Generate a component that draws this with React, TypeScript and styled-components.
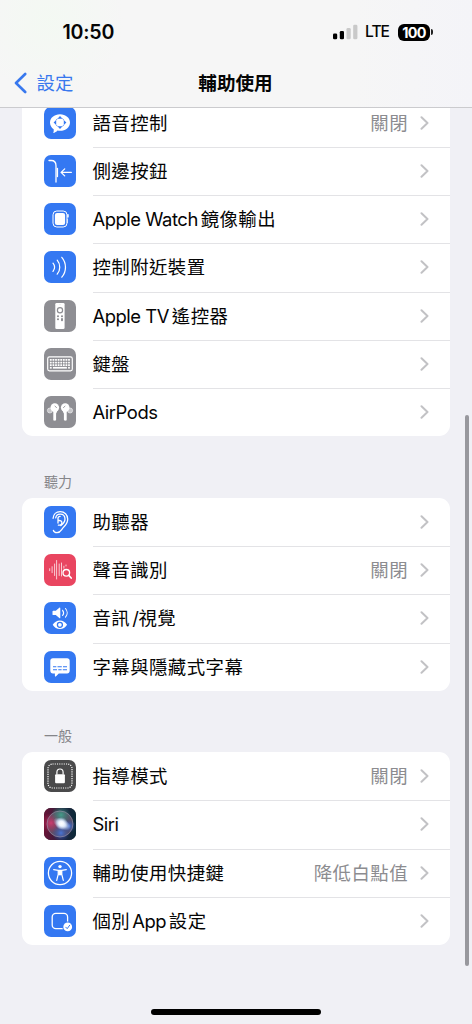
import React from "react";
import styled, { createGlobalStyle } from "styled-components";

const Global = createGlobalStyle`
  * { box-sizing: border-box; }
  body { margin: 0; background: #f0f0f6; }
`;

const cjk = `Inter, "Noto Sans CJK TC", sans-serif`;

const Screen = styled.div`
  position: relative;
  display: flex;
  flex-direction: column;
  width: 472px;
  height: 1024px;
  overflow: hidden;
  background: #f0f0f5;
  color: #050505;
  font-family: ${cjk};
  font-size: 18.4px;
  line-height: 24px;
`;

const Header = styled.header`
  flex: none;
  height: 108px;
  border-bottom: 1px solid #cbcbce;
  background:
    radial-gradient(circle at 50px 22px, rgba(242, 250, 241, 0.7), transparent 75px),
    linear-gradient(90deg, #f6f6f6, #f6f6f6 75%, #f4f4f8);
`;

const StatusBar = styled.div`
  display: flex;
  align-items: center;
  justify-content: space-between;
  height: 59px;
  padding: 5px 39px 0 62.5px;
`;

const Time = styled.span`
  font-size: 19.6px;
  font-weight: 600;
  letter-spacing: -0.2px;
`;

const StatusIcons = styled.div`
  display: flex;
  align-items: center;
`;

const Network = styled.span`
  margin: 0 9px 0 7.5px;
  font-size: 15.6px;
  font-weight: 500;
  letter-spacing: -1px;
`;

const Battery = styled.div`
  display: flex;
  align-items: center;
  justify-content: center;
  width: 32px;
  height: 17px;
  padding: 1px 0 0 0;
  border-radius: 6px;
  background: #000;
  color: #fff;
  font-size: 14.4px;
  font-weight: 700;
  letter-spacing: -0.7px;
`;

const BatteryTip = styled.i`
  width: 2px;
  height: 6px;
  margin-left: 1px;
  border-radius: 0 2px 2px 0;
  background: #222;
`;

const NavBar = styled.nav`
  display: grid;
  grid-template-columns: 1fr auto 1fr;
  align-items: center;
  height: 48px;
  padding: 0 15px 0 14px;
`;

const Back = styled.a`
  display: flex;
  align-items: center;
  gap: 9.5px;
  color: #3878ee;
`;

const Title = styled.h1`
  margin: 0;
  font-size: 18.6px;
  font-weight: 700;
  line-height: 24px;
`;

const Content = styled.main`
  flex: 1;
  min-height: 0;
  overflow: hidden;
  padding: 0 22px;
`;

const Group = styled.section<{ $clipped?: boolean }>`
  margin-top: ${(p) => (p.$clipped ? "-9.6px" : "0")};
  border-radius: 11px;
  background: #fff;
  overflow: hidden;
`;

const GroupTitle = styled.h2`
  display: flex;
  align-items: flex-end;
  height: 61.2px;
  margin: 0;
  padding: 0 22px 7px;
  color: #858589;
  font-size: 14px;
  font-weight: 400;
  line-height: 18px;
`;

const Row = styled.div`
  display: flex;
  align-items: center;
  height: 48.3px;
  padding-left: 22px;
`;

const RowBody = styled.div<{ $last: boolean }>`
  display: flex;
  flex: 1;
  align-items: center;
  align-self: flex-start;
  height: calc(100% + 1px);
  margin-left: 16.5px;
  padding-right: 21.5px;
  border-bottom: 1px solid ${(p) => (p.$last ? "transparent" : "#e3e3e6")};
`;

const Label = styled.span`
  flex: 1;
  letter-spacing: 0.45px;
  white-space: pre;
`;

const Latin = styled.span<{ $before?: boolean; $after?: boolean }>`
  margin-left: ${(p) => (p.$before ? "2px" : "0")};
  margin-right: ${(p) => (p.$after ? "2.8px" : "0")};
  letter-spacing: -0.45px;
`;

const Value = styled.span`
  margin-right: 11.5px;
  color: #8c8c90;
  letter-spacing: 0.45px;
`;

const Tile = styled.svg`
  flex: none;
  width: 32px;
  height: 32px;
  border-radius: 7px;
`;

const ScrollThumb = styled.div`
  position: absolute;
  top: 415px;
  right: 3px;
  width: 4px;
  height: 551px;
  border-radius: 2px;
  background: #98989d;
`;

const HomeIndicator = styled.div`
  position: absolute;
  bottom: 9px;
  left: 151px;
  width: 170px;
  height: 6px;
  border-radius: 3px;
  background: #000;
`;

const BLUE = "#3478f2";
const GRAY = "#8e8e93";

const keys: [number, number][] = [];
for (let r = 0; r < 3; r++) for (let c = 0; c < 8; c++) keys.push([5.9 + c * 2.6, 11.1 + r * 2.6]);

const icons: Record<string, [string, React.ReactNode]> = {
  voice: [BLUE, <>
    <path d="M16 7.2c5.7 0 10 3.600 10 8.300s-4.300 8.300-10 8.300c-.9 0-1.700-.1-2.500-.3-1.100 1.300-2.600 2.200-4.300 2.500.5-1.100.7-2.300.5-3.700C7.300 20.600 6 18.300 6 15.500c0-4.700 4.300-8.300 10-8.300z" fill="#fff" />
    <path d="M16 9.100l2.500 2.600h-5zM16 21.900l2.500-2.600h-5zM9.600 15.500l2.600-2.500v5zM22.400 15.500l-2.600-2.500v5z" fill={BLUE} />
    <path d="M12 13.200l1.700-1.700M18.300 11.500l1.700 1.700M20 17.800l-1.700 1.700M13.700 19.500L12 17.800" fill="none" stroke={BLUE} strokeWidth=".7" />
  </>],
  side: [BLUE, <g fill="none" stroke="#fff" strokeWidth="1.300" strokeLinecap="round" strokeLinejoin="round">
    <path d="M5 5.500h2.200c2.800 0 4.800 2 4.800 5.300V27" />
    <path d="M13.400 13.500v8" strokeWidth="1.400" />
    <path d="M27.300 17.400H17.200M20.700 13.900l-3.600 3.500 3.600 3.500" />
  </g>],
  watch: [BLUE, <>
    <rect x="9" y="8" width="14" height="16" rx="3.800" fill="none" stroke="#fff" strokeWidth="1" />
    <rect x="10.900" y="9.900" width="10.200" height="12.200" rx="2.100" fill="#fff" />
    <rect x="23.200" y="11" width="1.500" height="3.600" rx=".7" fill="#fff" />
    <path d="M23.400 16v4" stroke="#fff" strokeWidth=".7" />
  </>],
  nearby: [BLUE, <g fill="none" stroke="#fff" strokeWidth="1.250" strokeLinecap="round">
    <path d="M9 12.200c1.900 2.400 1.900 5.800 0 8.200M13.200 9.200c3.400 4 3.400 10 0 14M17.800 6.300c4.900 5.700 4.900 14.200 0 19.900" />
  </g>],
  remote: [GRAY, <>
    <rect x="11.300" y="2.900" width="9.300" height="26.100" rx="1.300" fill="#fff" />
    <circle cx="16" cy="10.200" r="2.600" fill="none" stroke={GRAY} strokeWidth="1.200" />
    <g fill={GRAY}><circle cx="14" cy="16.200" r="1.050" /><circle cx="18" cy="16.200" r="1.050" /><circle cx="14" cy="19.300" r="1.050" /><rect x="17" y="18" width="2" height="3.200" rx=".9" /><circle cx="16" cy="4.500" r=".3" /></g>
  </>],
  keyboard: [GRAY, <>
    <rect x="3.700" y="8.900" width="24.600" height="14" rx="1.800" fill="none" stroke="#fff" strokeWidth="1.200" />
    <g fill="#fff">{keys.map(([x, y]) => <rect key={`${x}-${y}`} x={x} y={y} width="1.800" height="1.700" rx=".3" />)}
      <rect x="5.900" y="18.900" width="1.800" height="1.700" /><rect x="8.900" y="18.900" width="14" height="1.700" /><rect x="24.100" y="18.900" width="1.800" height="1.700" /></g>
  </>],
  airpods: [GRAY, <>
    <g fill="#c6c6c9" stroke="#ececee" strokeWidth=".7"><circle cx="5.900" cy="14.500" r="2.500" /><circle cx="26.100" cy="14.500" r="2.500" /></g>
    <g fill="#fff"><circle cx="10.800" cy="11.600" r="4.300" /><circle cx="21.200" cy="11.600" r="4.300" />
      <path d="M9.300 11h3.700v4.500c0 1-.9 1.300-.9 2.200v6.100c0 1.200-2.800 1.200-2.800 0zM22.700 11H19v4.500c0 1 .9 1.300.9 2.200v6.100c0 1.200 2.800 1.200 2.800 0z" /></g>
    <path d="M11 10.200l1.500 1.300M21 10.200l-1.500 1.300" stroke={GRAY} strokeWidth=".9" strokeLinecap="round" />
  </>],
  ear: [BLUE, <g fill="none" stroke="#fff" strokeWidth="1.300" strokeLinecap="round" strokeLinejoin="round">
    <path d="M9.100 12.300C9.300 8.300 12.300 5.600 16.200 5.600c4.300 0 7.500 3.300 7.500 7.500 0 3.300-1.500 5.700-3.700 7.700-2.800 2.500-3.200 5.900-7 5.900-1.900 0-3.300-.9-3.600-2.300" />
    <path d="M11.700 11.800c.4-2.300 2.100-3.700 4.500-3.700 3 0 4.800 2.200 4.800 5 0 2.900-1.800 4.800-4.300 6.500" />
    <path d="M14 17V12.300c0-1.200 1-1.900 2.100-1.900M14 14.600c2.400-.4 3.900.4 3.900 2.100 0 1.600-1.300 2.500-3.500 2.500" />
  </g>],
  sound: ["#e94560", <g fill="none" stroke="#fff" strokeLinecap="round">
    <path d="M5.700 14.700v2M8.100 12.700v6M10.600 10v11.500M12.600 6.500v18.500M15.200 10v11.500M17.500 9v13M19.900 12.200v2M22 11v1" strokeWidth=".85" opacity=".85" />
    <circle cx="22.300" cy="18.800" r="3.300" strokeWidth="1.350" fill="#e94560" /><path d="M24.900 21.500l2.300 2.500" strokeWidth="1.700" />
  </g>],
  av: [BLUE, <>
    <path d="M9.200 8.700h2.600l3.500-3c.5-.4 1-.2 1 .4v9.600c0 .6-.5.800-1 .4l-3.500-3H9.200c-.4 0-.7-.3-.7-.7V9.400c0-.4.3-.7.7-.7z" fill="#fff" />
    <path d="M18.600 8.300c1.200 1.500 1.200 3.700 0 5.200M21.500 6.500c2.200 2.500 2.200 6.200 0 8.700" fill="none" stroke="#fff" strokeWidth="1.100" strokeLinecap="round" />
    <path d="M8.700 22.800c1.600-2.700 4.200-4.300 7.200-4.300s5.600 1.600 7.200 4.300c-1.600 2.700-4.200 4.300-7.200 4.300s-5.600-1.600-7.200-4.300z" fill="#fff" />
    <circle cx="15.900" cy="22.800" r="2.500" fill="none" stroke={BLUE} strokeWidth="1.300" />
  </>],
  caption: [BLUE, <>
    <path d="M8.900 7.200h14.200c1.600 0 2.600 1 2.600 2.600v10c0 1.600-1 2.600-2.600 2.600h-8.300l-3 3c-.4.400-.9.200-.9-.4v-2.600h-2c-1.600 0-2.600-1-2.600-2.600v-10c0-1.600 1-2.600 2.600-2.600z" fill="#fff" />
    <path d="M9 15.700h3.300M13.500 15.700h4.300M19 15.700h4M9 18.700h4M14.300 18.700h3.300M18.800 18.700H23" stroke={BLUE} strokeWidth="1.100" />
  </>],
  guided: ["#4a4a4b", <>
    <rect x="4" y="4" width="24" height="24" rx="4.500" fill="none" stroke="#fff" strokeWidth="1.200" strokeDasharray="1.100 1.150" />
    <rect x="11.100" y="14.200" width="9.800" height="9" rx="1" fill="#fff" />
    <path d="M12.900 14.600v-2.300c0-2 1.300-3.300 3.100-3.300s3.100 1.300 3.100 3.300v2.300" fill="none" stroke="#fff" strokeWidth="1.200" />
  </>],
  siri: ["#22172a", <>
    <defs>
      <radialGradient id="core"><stop offset="0" stopColor="#fff" /><stop offset=".35" stopColor="#f2f8ff" stopOpacity=".9" /><stop offset="1" stopColor="#b9d4ff" stopOpacity="0" /></radialGradient>
      <radialGradient id="red"><stop offset="0" stopColor="#d63a70" /><stop offset="1" stopColor="#b51f50" stopOpacity="0" /></radialGradient>
      <radialGradient id="teal"><stop offset="0" stopColor="#43a08c" /><stop offset="1" stopColor="#2c7a70" stopOpacity="0" /></radialGradient>
      <radialGradient id="azure"><stop offset="0" stopColor="#4678e0" /><stop offset="1" stopColor="#28489c" stopOpacity="0" /></radialGradient>
      <linearGradient id="night"><stop offset="0" stopColor="#6a1235" /><stop offset=".6" stopColor="#1f2440" /><stop offset="1" stopColor="#0b2a38" /></linearGradient>
    </defs>
    <rect width="32" height="32" fill="url(#night)" />
    <circle cx="16" cy="16" r="13" fill="#66596f" opacity=".85" />
    <circle cx="7" cy="15" r="10" fill="url(#red)" opacity=".9" />
    <circle cx="17" cy="7" r="10" fill="url(#teal)" opacity=".95" />
    <circle cx="17" cy="25" r="9" fill="url(#azure)" opacity=".9" />
    <circle cx="25" cy="18" r="7" fill="url(#azure)" opacity=".9" />
    <circle cx="16" cy="16" r="13" fill="none" stroke="#9a93a8" strokeWidth=".8" opacity=".8" />
    <ellipse cx="18" cy="16" rx="9.500" ry="5.500" fill="url(#core)" transform="rotate(28 18 16)" />
    <circle cx="17.500" cy="15.500" r="6.500" fill="url(#core)" />
  </>],
  access: [BLUE, <>
    <circle cx="16" cy="16" r="11.600" fill="none" stroke="#fff" strokeWidth="1.300" />
    <circle cx="16" cy="9.600" r="1.700" fill="#fff" />
    <path d="M9.700 12.600l4.500.8v4l-1.500 6M22.300 12.600l-4.500.8v4l1.500 6M14.300 13.400h3.400v4.300h-3.400z" fill="none" stroke="#fff" strokeWidth="1.200" strokeLinecap="round" strokeLinejoin="round" />
    <path d="M14.200 13.200h3.600v4.300l-1.800.7-1.800-.7z" fill="#fff" />
  </>],
  perapp: [BLUE, <>
    <rect x="8.200" y="8.300" width="15.400" height="15.400" rx="3.600" fill="none" stroke="#fff" strokeWidth="1.300" />
    <circle cx="23.700" cy="21.900" r="5.300" fill={BLUE} /><circle cx="23.700" cy="21.900" r="4.400" fill="#fff" />
    <path d="M21.800 22.200l1.400 1.500 2.500-3.500" fill="none" stroke={BLUE} strokeWidth="1" strokeLinecap="round" strokeLinejoin="round" />
  </>],
};

const Icon = ({ name }: { name: string }) => (
  <Tile viewBox="0 0 32 32"><rect width="32" height="32" fill={icons[name][0]} />{icons[name][1]}</Tile>
);

const Chevron = () => (
  <svg width="9" height="14" viewBox="0 0 9 14" fill="none" stroke="#c2c2c5" strokeWidth="2" strokeLinecap="round" strokeLinejoin="round">
    <path d="M1.500 1.300L7.500 7l-6 5.700" />
  </svg>
);

type Item = { icon: string; label: React.ReactNode; value?: string };

const main: Item[] = [
  { icon: "voice", label: "語音控制", value: "關閉" },
  { icon: "side", label: "側邊按鈕" },
  { icon: "watch", label: <><Latin $after>Apple Watch</Latin>鏡像輸出</> },
  { icon: "nearby", label: "控制附近裝置" },
  { icon: "remote", label: <><Latin $after>Apple TV</Latin>遙控器</> },
  { icon: "keyboard", label: "鍵盤" },
  { icon: "airpods", label: <Latin>AirPods</Latin> },
];
const hearing: Item[] = [
  { icon: "ear", label: "助聽器" },
  { icon: "sound", label: "聲音識別", value: "關閉" },
  { icon: "av", label: <>音訊<Latin $before>/</Latin>視覺</> },
  { icon: "caption", label: "字幕與隱藏式字幕" },
];
const general: Item[] = [
  { icon: "guided", label: "指導模式", value: "關閉" },
  { icon: "siri", label: <Latin>Siri</Latin> },
  { icon: "access", label: "輔助使用快捷鍵", value: "降低白點值" },
  { icon: "perapp", label: <>個別<Latin $before $after>App</Latin>設定</> },
];

const List = ({ items, clipped }: { items: Item[]; clipped?: boolean }) => (
  <Group $clipped={clipped}>
    {items.map((item, i) => (
      <Row key={item.icon}>
        <Icon name={item.icon} />
        <RowBody $last={i === items.length - 1}>
          <Label>{item.label}</Label>
          {item.value && <Value>{item.value}</Value>}
          <Chevron />
        </RowBody>
      </Row>
    ))}
  </Group>
);

export default function App() {
  return (
    <Screen>
      <Global />
      <Header>
        <StatusBar>
          <Time>10:50</Time>
          <StatusIcons>
            <svg width="25" height="16" viewBox="0 0 25 16">
              <rect x="0" y="9.500" width="4.200" height="5.800" rx="1.300" />
              <rect x="6.800" y="7" width="4.200" height="8.300" rx="1.300" />
              <rect x="13.500" y="4" width="4.200" height="11.300" rx="1.300" fill="#c9c9c9" />
              <rect x="20.200" y=".7" width="4.200" height="14.600" rx="1.300" fill="#c9c9c9" />
            </svg>
            <Network>LTE</Network>
            <Battery>100</Battery>
            <BatteryTip />
          </StatusIcons>
        </StatusBar>
        <NavBar>
          <Back>
            <svg width="13" height="22" viewBox="0 0 13 22" fill="none" stroke="currentColor" strokeWidth="2.600" strokeLinecap="round" strokeLinejoin="round">
              <path d="M11.200 2L2 11l9.200 9" />
            </svg>
            設定
          </Back>
          <Title>輔助使用</Title>
        </NavBar>
      </Header>
      <Content>
        <List items={main} clipped />
        <GroupTitle>聽力</GroupTitle>
        <List items={hearing} />
        <GroupTitle>一般</GroupTitle>
        <List items={general} />
      </Content>
      <ScrollThumb />
      <HomeIndicator />
    </Screen>
  );
}
